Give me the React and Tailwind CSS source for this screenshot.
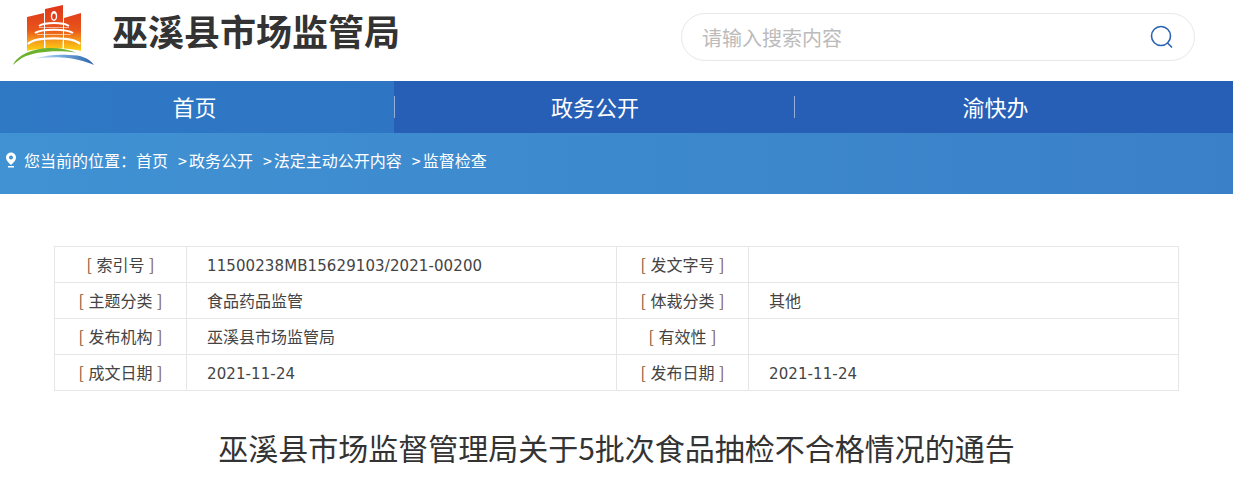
const CJK = '"Noto Sans CJK SC", sans-serif';
const Label = ({ children }) => (
  <td className="w-[132px] border border-[#e6e6e6] pb-[2px] text-center text-[16px] text-[#444]">
    <span className="mr-[1px] text-[#7d5a36]">[</span> {children} <span className="ml-[1px] text-[#7d5a36]">]</span>
  </td>
);
const Value = ({ children, w }) => (
  <td className={`border border-[#e6e6e6] pb-[2px] pl-5 text-[16px] text-[#444] ${w}`}>{children}</td>
);
const Latin = ({ children }) => (
  <span className="relative top-[1px] text-[15px] tracking-[0.1px]" style={{ fontFamily: '"DejaVu Sans", sans-serif' }}>{children}</span>
);
function Logo() {
  return (
    <svg width="82" height="61" viewBox="0 0 82 61" className="block">
      <defs>
        <linearGradient id="g" gradientUnits="userSpaceOnUse" x1="0" y1="4" x2="0" y2="46">
          <stop offset="0" stopColor="#e03a1a" />
          <stop offset="0.5" stopColor="#e8561a" />
          <stop offset="0.75" stopColor="#f5981a" />
          <stop offset="1" stopColor="#fdd20f" />
        </linearGradient>
        <linearGradient id="b" x1="0" y1="0" x2="1" y2="0">
          <stop offset="0" stopColor="#d8ecf8" />
          <stop offset="0.5" stopColor="#6fa6d8" />
          <stop offset="1" stopColor="#2a62ac" />
        </linearGradient>
      </defs>
      <path d="M14 12 L31 8 V44 C25 44 19 44.500 14 46Z" fill="url(#g)" />
      <path d="M32 4 L50 0 V43.500 H32Z" fill="url(#g)" />
      <path d="M51 13 L68 8 V46 C63 44.500 57 44 51 43.500Z" fill="url(#g)" />
      <ellipse cx="41" cy="11" rx="3.200" ry="5" fill="#fff" />
      <ellipse cx="41" cy="11.500" rx="1.800" ry="3" fill="#e03a1a" />
      <path d="M26 21 C32 17 50 17 56 21" stroke="#fff" strokeWidth="2" fill="none" />
      <path d="M22 28 C28 23.500 54 23.500 60 28" stroke="#fff" strokeWidth="2" fill="none" />
      <path d="M15 39 C22 31.500 60 31.500 67 39" stroke="#fff" strokeWidth="2.400" fill="none" />
      <path d="M26 22.500 H56 M24 29.500 H58" stroke="#fff" strokeWidth="0.800" opacity="0.7" />
      <path d="M32 36 V44 M50 36 V44" stroke="#fff" strokeWidth="1" opacity="0.8" />
      <path d="M0 60 C4 50 20 43 38 43 C47 43 56 45 63 47.500 C45 45 22 46 9 53 C6 55 3 57 0 60Z" fill="#6cb22e" />
      <path d="M20 54 C32 50 46 49 56 50 C68 50 76 53 81 60 C72 56 60 53 48 52.500 C38 52 28 53 20 54Z" fill="url(#b)" />
    </svg>
  );
}
const Crumb = ({ children }) => (
  <span className="ml-[10px]"><span className="mr-[2px]">&gt;</span>{children}</span>
);
export default function App() {
  return (
    <div className="w-[1233px] bg-white" style={{ fontFamily: CJK }}>
      <header className="flex h-[81px] items-start">
        <div className="ml-[13px] mt-[5px] w-[84px]"><Logo /></div>
        <h1 className="ml-[15px] mt-[5px] text-[36px] font-bold leading-[50px] text-[#333]">巫溪县市场监管局</h1>
        <div className="ml-[281px] mt-[13px] flex h-[48px] w-[514px] items-center justify-between rounded-full border border-[#e8e8e8] pl-5 pr-5">
          <span className="pt-[2px] text-[20px] text-[#bbbbbb]">请输入搜索内容</span>
          <svg width="24" height="24" viewBox="0 0 24 24" fill="none" stroke="#2a62b6" strokeWidth="1.600">
            <circle cx="11" cy="11" r="9.500" />
            <path d="M17.500 18 L22 22.500" />
          </svg>
        </div>
      </header>
      <nav className="flex h-[52px] bg-[#275fb7] text-[22px] text-white">
        <div className="flex w-[394px] items-center justify-center bg-gradient-to-r from-[#2f78c4] to-[#2e76c4] pb-[2px] pr-[5px]">首页</div>
        <div className="relative flex w-[400px] items-center justify-center pb-[2px] pl-[2px]">
          <span className="absolute left-0 top-[15px] h-[22px] w-px bg-white/50" />
          政务公开
        </div>
        <div className="relative flex w-[401px] items-center justify-center pb-[2px] pl-[2px]">
          <span className="absolute left-0 top-[15px] h-[22px] w-px bg-white/50" />
          渝快办
        </div>
      </nav>
      <div className="flex h-[61px] items-center bg-gradient-to-r from-[#4092d3] to-[#3a80c8] pb-[8px] pl-[5px] text-[16px] text-white">
        <svg width="12" height="16" viewBox="0 0 12 16" className="mr-[7px]">
          <path fillRule="evenodd" d="M6 0.500a5 5 0 0 1 5 5c0 3-3 5.500-5 7.500-2-2-5-4.500-5-7.500a5 5 0 0 1 5-5z M6 3.500a2 2 0 1 0 0 4 2 2 0 0 0 0-4z" fill="#fff" />
          <rect x="3" y="14" width="6" height="1.500" fill="#fff" />
        </svg>
        <span>您当前的位置：首页</span>
        <Crumb>政务公开</Crumb>
        <Crumb>法定主动公开内容</Crumb>
        <Crumb>监督检查</Crumb>
      </div>
      <div className="px-[54px] pt-[52px]">
        <table className="w-[1125px] table-fixed border-collapse">
          <tbody>
            <tr className="h-[36px]">
              <Label>索引号</Label>
              <Value w="w-[430px]"><Latin>11500238MB15629103/2021-00200</Latin></Value>
              <Label>发文字号</Label>
              <Value />
            </tr>
            <tr className="h-[36px]">
              <Label>主题分类</Label>
              <Value>食品药品监管</Value>
              <Label>体裁分类</Label>
              <Value>其他</Value>
            </tr>
            <tr className="h-[36px]">
              <Label>发布机构</Label>
              <Value>巫溪县市场监管局</Value>
              <Label>有效性</Label>
              <Value />
            </tr>
            <tr className="h-[36px]">
              <Label>成文日期</Label>
              <Value><Latin>2021-11-24</Latin></Value>
              <Label>发布日期</Label>
              <Value><Latin>2021-11-24</Latin></Value>
            </tr>
          </tbody>
        </table>
        <h2 className="mt-[32px] text-center text-[30px] font-normal leading-[48px] text-[#333]">巫溪县市场监督管理局关于5批次食品抽检不合格情况的通告</h2>
      </div>
    </div>
  );
}
